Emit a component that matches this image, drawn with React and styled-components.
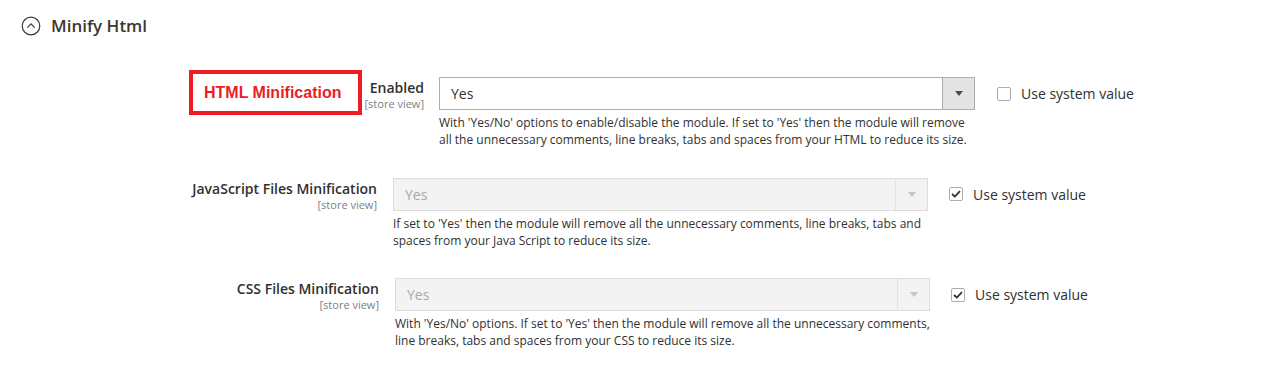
import React from "react";
import styled, { createGlobalStyle } from "styled-components";

const Global = createGlobalStyle`
  html, body { margin: 0; padding: 0; background: #fff; }
  body { font-family: "Open Sans", "Liberation Sans", sans-serif; color: #303030; }
`;

const Page = styled.div`
  width: 1277px;
  height: 374px;
  overflow: hidden;
  box-sizing: border-box;
  padding-top: 16px;
`;

const Header = styled.div`
  display: flex;
  align-items: center;
  gap: 10px;
  padding-left: 21px;
  height: 20px;
`;

const HeaderTitle = styled.span`
  font-size: 17px;
  font-weight: 600;
  color: #41362f;
  line-height: 20px;
`;

const Rows = styled.div`
  display: flex;
  flex-direction: column;
  gap: 29.5px;
  margin-top: 41px;
`;

const Row = styled.div`
  display: flex;
  align-items: flex-start;
  margin-left: ${(p) => p.$offset}px;
`;

const LabelCell = styled.div`
  position: relative;
  width: 200px;
  flex: none;
  text-align: right;
  padding-top: 1px;
  margin-right: ${(p) => p.$gap}px;
`;

const LabelText = styled.div`
  font-size: 14px;
  font-weight: 600;
  line-height: 19px;
  color: #303030;
`;

const Scope = styled.div`
  font-size: 11px;
  line-height: 14px;
  color: #808080;
`;

const Annotation = styled.div`
  position: absolute;
  right: 62px;
  top: -7px;
  width: 173px;
  height: 45px;
  box-sizing: border-box;
  border: 4px solid #ed1c24;
  display: flex;
  align-items: center;
  padding-left: 11px;
  font-family: "Liberation Sans", Arial, sans-serif;
  font-weight: 700;
  font-size: 16px;
  color: #ed1c24;
  white-space: nowrap;
`;

const Control = styled.div`
  width: ${(p) => p.$width}px;
  flex: none;
`;

const Select = styled.div`
  height: 33px;
  box-sizing: border-box;
  display: flex;
  border: 1px solid ${(p) => (p.$disabled ? "#dcdcdc" : "#adadad")};
  background: ${(p) => (p.$disabled ? "#f3f3f3" : "#fff")};
`;

const SelectValue = styled.div`
  flex: 1;
  padding-left: 11px;
  display: flex;
  align-items: center;
  font-size: 14px;
  color: ${(p) => (p.$disabled ? "#a8a8a8" : "#303030")};
`;

const ArrowBox = styled.div`
  width: 31px;
  flex: none;
  display: flex;
  align-items: center;
  justify-content: center;
  border-left: 1px solid ${(p) => (p.$disabled ? "#e2e2e2" : "#adadad")};
  background: ${(p) => (p.$disabled ? "#f3f3f3" : "#e3e3e3")};
`;

const Arrow = styled.div`
  width: 0;
  height: 0;
  border-left: 4px solid transparent;
  border-right: 4px solid transparent;
  border-top: 5px solid ${(p) => (p.$disabled ? "#c4c4c4" : "#514943")};
`;

const Help = styled.div`
  margin-top: 4px;
  font-size: 12px;
  line-height: 17px;
  color: #303030;
  white-space: nowrap;
`;

const SystemValue = styled.label`
  display: flex;
  align-items: center;
  height: 33px;
  margin-left: ${(p) => p.$gap}px;
  gap: 10px;
  font-size: 14px;
  color: #303030;
`;

const Box = styled.span`
  width: 14px;
  height: 14px;
  box-sizing: border-box;
  border: 1px solid #adadad;
  border-radius: 2px;
  background: #fff;
  display: flex;
  align-items: center;
  justify-content: center;
`;

const CollapseIcon = () => (
  <svg width="20" height="20" viewBox="0 0 20 20">
    <circle cx="10" cy="10" r="8.8" fill="none" stroke="#41362f" strokeWidth="1.2" />
    <path d="M6.3 11.6 L10 7.9 L13.7 11.6" fill="none" stroke="#41362f" strokeWidth="1.2" />
  </svg>
);

const Check = () => (
  <svg width="10" height="8" viewBox="0 0 10 8">
    <path d="M1 4 L3.8 6.6 L9 1.2" fill="none" stroke="#303030" strokeWidth="1.8" />
  </svg>
);

const rows = [
  {
    label: "Enabled",
    offset: 224,
    gap: 15,
    width: 536,
    cbGap: 22,
    disabled: false,
    checked: false,
    annotation: "HTML Minification",
    help: [
      "With 'Yes/No' options to enable/disable the module. If set to 'Yes' then the module will remove",
      "all the unnecessary comments, line breaks, tabs and spaces from your HTML to reduce its size.",
    ],
  },
  {
    label: "JavaScript Files Minification",
    offset: 177,
    gap: 16,
    width: 535,
    cbGap: 21,
    disabled: true,
    checked: true,
    help: [
      "If set to 'Yes' then the module will remove all the unnecessary comments, line breaks, tabs and",
      "spaces from your Java Script to reduce its size.",
    ],
  },
  {
    label: "CSS Files Minification",
    offset: 179,
    gap: 16,
    width: 535,
    cbGap: 21,
    disabled: true,
    checked: true,
    help: [
      "With 'Yes/No' options. If set to 'Yes' then the module will remove all the unnecessary comments,",
      "line breaks, tabs and spaces from your CSS to reduce its size.",
    ],
  },
];

export default function App() {
  return (
    <>
      <Global />
      <Page>
        <Header>
          <CollapseIcon />
          <HeaderTitle>Minify Html</HeaderTitle>
        </Header>
        <Rows>
          {rows.map((r) => (
            <Row key={r.label} $offset={r.offset}>
              <LabelCell $gap={r.gap}>
                {r.annotation && <Annotation>{r.annotation}</Annotation>}
                <LabelText>{r.label}</LabelText>
                <Scope>[store view]</Scope>
              </LabelCell>
              <Control $width={r.width}>
                <Select $disabled={r.disabled}>
                  <SelectValue $disabled={r.disabled}>Yes</SelectValue>
                  <ArrowBox $disabled={r.disabled}>
                    <Arrow $disabled={r.disabled} />
                  </ArrowBox>
                </Select>
                <Help>
                  {r.help[0]}
                  <br />
                  {r.help[1]}
                </Help>
              </Control>
              <SystemValue $gap={r.cbGap}>
                <Box>{r.checked && <Check />}</Box>
                Use system value
              </SystemValue>
            </Row>
          ))}
        </Rows>
      </Page>
    </>
  );
}
